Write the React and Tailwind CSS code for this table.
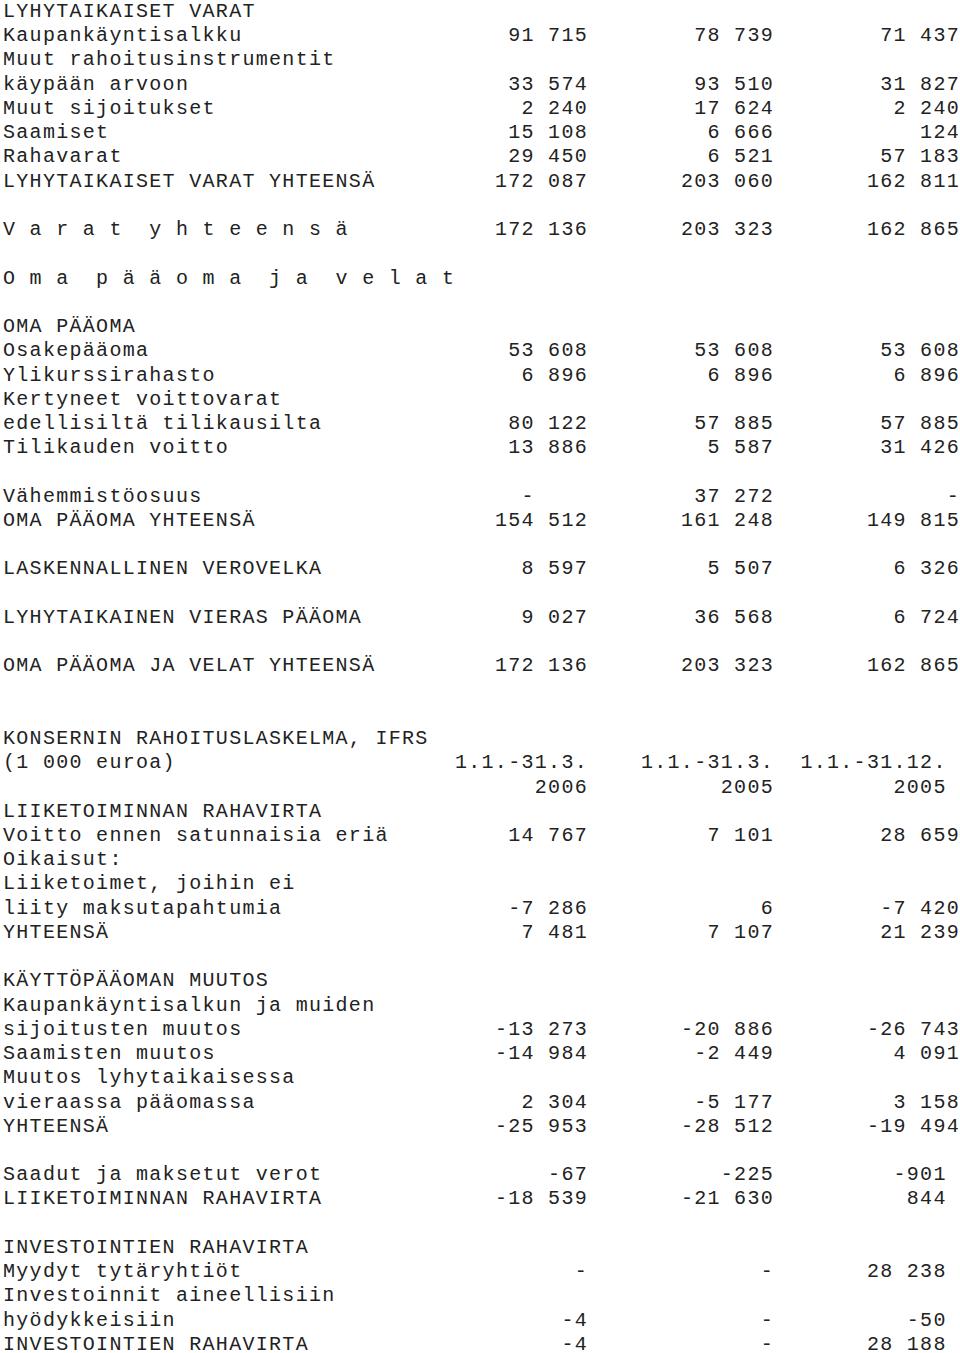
import React from 'react';

// one entry per printed line: [label, col1, col2, col3]
const rows = [
  ['LYHYTAIKAISET VARAT'],
  ['Kaupankäyntisalkku', '91 715', '78 739', '71 437'],
  ['Muut rahoitusinstrumentit'],
  ['käypään arvoon', '33 574', '93 510', '31 827'],
  ['Muut sijoitukset', '2 240', '17 624', '2 240'],
  ['Saamiset', '15 108', '6 666', '124'],
  ['Rahavarat', '29 450', '6 521', '57 183'],
  ['LYHYTAIKAISET VARAT YHTEENSÄ', '172 087', '203 060', '162 811'],
  [''],
  ['V a r a t  y h t e e n s ä', '172 136', '203 323', '162 865'],
  [''],
  ['O m a  p ä ä o m a  j a  v e l a t'],
  [''],
  ['OMA PÄÄOMA'],
  ['Osakepääoma', '53 608', '53 608', '53 608'],
  ['Ylikurssirahasto', '6 896', '6 896', '6 896'],
  ['Kertyneet voittovarat'],
  ['edellisiltä tilikausilta', '80 122', '57 885', '57 885'],
  ['Tilikauden voitto', '13 886', '5 587', '31 426'],
  [''],
  ['Vähemmistöosuus', '-    ', '37 272', '-'],
  ['OMA PÄÄOMA YHTEENSÄ', '154 512', '161 248', '149 815'],
  [''],
  ['LASKENNALLINEN VEROVELKA', '8 597', '5 507', '6 326'],
  [''],
  ['LYHYTAIKAINEN VIERAS PÄÄOMA', '9 027', '36 568', '6 724'],
  [''],
  ['OMA PÄÄOMA JA VELAT YHTEENSÄ', '172 136', '203 323', '162 865'],
  [''],
  [''],
  ['KONSERNIN RAHOITUSLASKELMA, IFRS'],
  ['(1 000 euroa)', '1.1.-31.3.', '1.1.-31.3.', '1.1.-31.12. '],
  ['', '2006', '2005', '2005 '],
  ['LIIKETOIMINNAN RAHAVIRTA'],
  ['Voitto ennen satunnaisia eriä', '14 767', '7 101', '28 659'],
  ['Oikaisut:'],
  ['Liiketoimet, joihin ei'],
  ['liity maksutapahtumia', '-7 286', '6', '-7 420'],
  ['YHTEENSÄ', '7 481', '7 107', '21 239'],
  [''],
  ['KÄYTTÖPÄÄOMAN MUUTOS'],
  ['Kaupankäyntisalkun ja muiden'],
  ['sijoitusten muutos', '-13 273', '-20 886', '-26 743'],
  ['Saamisten muutos', '-14 984', '-2 449', '4 091'],
  ['Muutos lyhytaikaisessa'],
  ['vieraassa pääomassa', '2 304', '-5 177', '3 158'],
  ['YHTEENSÄ', '-25 953', '-28 512', '-19 494'],
  [''],
  ['Saadut ja maksetut verot', '-67', '-225', '-901 '],
  ['LIIKETOIMINNAN RAHAVIRTA', '-18 539', '-21 630', '844 '],
  [''],
  ['INVESTOINTIEN RAHAVIRTA'],
  ['Myydyt tytäryhtiöt', '-', '-', '28 238 '],
  ['Investoinnit aineellisiin'],
  ['hyödykkeisiin', '-4', '-', '-50 '],
  ['INVESTOINTIEN RAHAVIRTA', '-4', '-', '28 188 '],
];

function Line({ cells }) {
  const [label, a, b, c] = cells;
  if (a === undefined) {
    return <div className="h-[24.24px] whitespace-pre">{label || '\u00a0'}</div>;
  }
  return (
    <div className="grid h-[24.24px] grid-cols-[399px_186px_186px_186px]">
      <span className="whitespace-pre">{label}</span>
      <span className="whitespace-pre text-right">{a}</span>
      <span className="whitespace-pre text-right">{b}</span>
      <span className="whitespace-pre text-right">{c}</span>
    </div>
  );
}

export default function App() {
  return (
    <div className="h-[1353px] w-[960px] overflow-hidden bg-white">
      <div className="pl-[3px] font-['Liberation_Mono',monospace] text-[20px] leading-[24.24px] tracking-[1.3px] text-[#222]">
        {rows.map((r, i) => (
          <Line key={i} cells={r} />
        ))}
      </div>
    </div>
  );
}
